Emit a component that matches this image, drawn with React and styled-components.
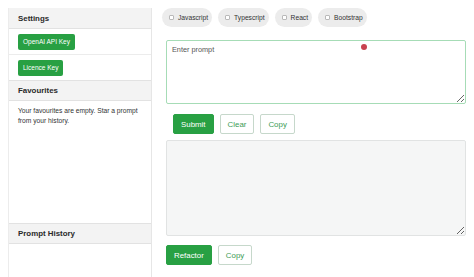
import styled, { createGlobalStyle } from 'styled-components';

const GlobalStyle = createGlobalStyle`
  body {
    margin: 0;
    background: #ffffff;
    font-family: "Liberation Sans", Arial, sans-serif;
    color: #222;
  }
`;

const tags = ['Javascript', 'Typescript', 'React', 'Bootstrap'];

export default function App() {
  return (
    <>
      <GlobalStyle />
      <Page>
        <Sidebar>
          <PanelHeader>Settings</PanelHeader>
          <SettingRow>
            <SmallButton>OpenAI API Key</SmallButton>
          </SettingRow>
          <SettingRow>
            <SmallButton>Licence Key</SmallButton>
          </SettingRow>
          <PanelHeader>Favourites</PanelHeader>
          <PanelBody $grow>
            Your favourites are empty. Star a prompt from your history.
          </PanelBody>
          <PanelHeader>Prompt History</PanelHeader>
          <PanelBody $height="33px" />
        </Sidebar>
        <Main>
          <TagRow>
            {tags.map((t) => (
              <Tag key={t}>
                <TagBox />
                {t}
              </Tag>
            ))}
          </TagRow>
          <PromptWrap>
            <PromptArea placeholder="Enter prompt" />
            <RecordDot />
          </PromptWrap>
          <ActionRow $indent="7px" $top="10px">
            <Button>Submit</Button>
            <Button $outline>Clear</Button>
            <Button $outline>Copy</Button>
          </ActionRow>
          <OutputArea readOnly />
          <ActionRow $top="9px">
            <Button>Refactor</Button>
            <Button $outline>Copy</Button>
          </ActionRow>
        </Main>
      </Page>
    </>
  );
}

const Page = styled.div`
  display: flex;
  padding: 8px 0 0 8px;
  height: 277px;
  box-sizing: border-box;
  overflow: hidden;
`;

const Sidebar = styled.div`
  width: 144px;
  flex-shrink: 0;
  display: flex;
  flex-direction: column;
  border-left: 1px solid #ececec;
  border-right: 1px solid #e6e6e6;
  box-sizing: border-box;
`;

const PanelHeader = styled.div`
  height: 21px;
  flex-shrink: 0;
  display: flex;
  align-items: center;
  padding-left: 9px;
  background: #f3f3f3;
  border-top: 1px solid #e2e2e2;
  border-bottom: 1px solid #e2e2e2;
  font-size: 7.9px;
  font-weight: bold;
  color: #2a2a2a;
  box-sizing: border-box;
  &:first-child {
    border-top: none;
  }
`;

const SettingRow = styled.div`
  height: 25px;
  display: flex;
  align-items: center;
  padding-left: 9px;
  border-bottom: 1px solid #ececec;
  &:nth-child(3) {
    border-bottom: none;
  }
`;

const SmallButton = styled.button`
  height: 16px;
  padding: 0 5px;
  border: none;
  border-radius: 2px;
  background: #28a043;
  color: #ffffff;
  font-family: inherit;
  font-size: 6.5px;
`;

const PanelBody = styled.div`
  flex: ${(p) => (p.$grow ? 1 : 'none')};
  height: ${(p) => p.$height || 'auto'};
  box-sizing: border-box;
  padding: 5px 6px 5px 9px;
  font-size: 6.7px;
  line-height: 10px;
  color: #333;
`;

const Main = styled.div`
  flex: 1;
  display: flex;
  flex-direction: column;
  padding-left: 14px;
  padding-right: 8px;
`;

const TagRow = styled.div`
  display: flex;
  gap: 6px;
  margin-left: -4px;
`;

const Tag = styled.div`
  height: 19px;
  display: flex;
  align-items: center;
  gap: 4px;
  padding: 0 4px 0 7px;
  border-radius: 10px;
  background: #ececec;
  font-size: 6.7px;
  color: #333;
`;

const TagBox = styled.span`
  width: 3px;
  height: 3px;
  border: 1px solid #b9b9b9;
  border-radius: 1px;
  background: #fff;
`;

const PromptWrap = styled.div`
  position: relative;
  margin-top: 13px;
`;

const PromptArea = styled.textarea`
  display: block;
  width: 300px;
  height: 64px;
  box-sizing: border-box;
  border: 1.5px solid #a6dcb6;
  border-radius: 2px;
  padding: 4px 5px;
  resize: vertical;
  font-family: inherit;
  font-size: 7.3px;
  &::placeholder {
    color: #555;
  }
`;

const RecordDot = styled.span`
  position: absolute;
  left: 195px;
  top: 4px;
  width: 6px;
  height: 6px;
  border-radius: 50%;
  background: #c9424f;
`;

const ActionRow = styled.div`
  display: flex;
  gap: 6px;
  margin: ${(p) => p.$top || '10px'} 0 6px ${(p) => p.$indent || '0'};
`;

const Button = styled.button`
  height: 20px;
  padding: 0 7px;
  border-radius: 2px;
  font-family: inherit;
  font-size: 7.9px;
  border: 1px solid ${(p) => (p.$outline ? '#c6d8cb' : '#28a043')};
  background: ${(p) => (p.$outline ? '#ffffff' : '#28a043')};
  color: ${(p) => (p.$outline ? '#3c9c55' : '#ffffff')};
`;

const OutputArea = styled.textarea`
  display: block;
  width: 300px;
  height: 96px;
  box-sizing: border-box;
  border: 1px solid #e1e3e3;
  border-radius: 2px;
  background: #f5f6f6;
  resize: vertical;
`;
